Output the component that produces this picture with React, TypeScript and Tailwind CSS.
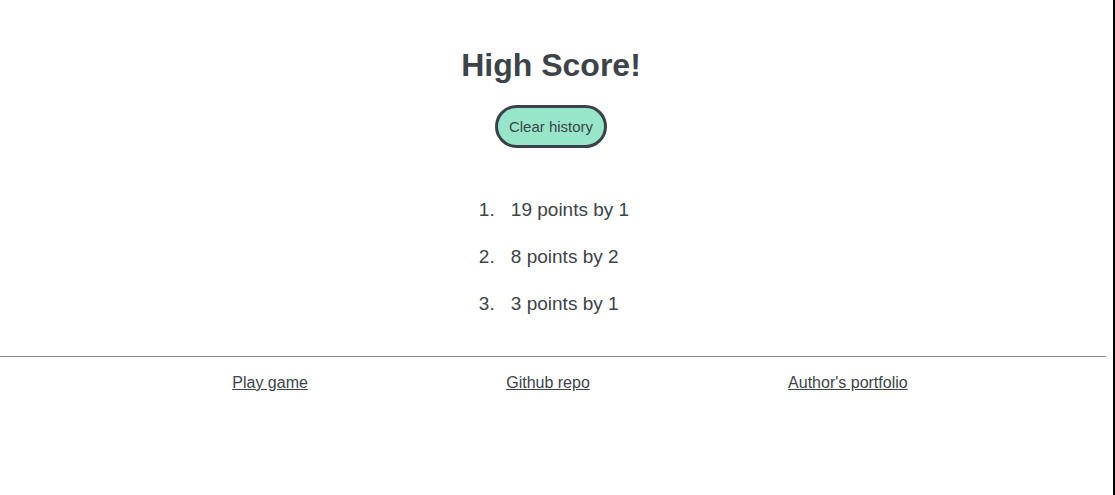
const scores = [
  { points: 19, by: 1 },
  { points: 8, by: 2 },
  { points: 3, by: 1 },
];

const links = ["Play game", "Github repo", "Author's portfolio"];

const App = () => {
  return (
    <div
      className="flex h-[495px] w-[1115px] bg-white text-[#3c4349]"
      style={{ fontFamily: '"Liberation Sans", Arial, sans-serif' }}
    >
      <div className="w-[1106px] shrink-0">
        <div className="flex flex-col items-center pr-[4px] pt-[46px]">
          <h1 className="text-[32px] font-bold leading-[38px]">High Score!</h1>
          <button className="mt-[21px] h-[43px] rounded-full border-[3px] border-[#3a4148] bg-[#98e6c9] px-[11px] text-[15px] leading-[17px]">
            Clear history
          </button>
          <ol className="ml-[6px] mt-[50px] flex flex-col gap-[24px] text-[19px] leading-[23px]">
            {scores.map((s, i) => (
              <li key={i} className="flex">
                <span className="w-[32px]">{i + 1}.</span>
                <span>
                  {s.points} points by {s.by}
                </span>
              </li>
            ))}
          </ol>
        </div>
        <hr className="mt-[41px] border-t border-[#8a8a8a]" />
        <div className="mt-[16px] flex justify-evenly pl-[34px] text-[16px] leading-[19px]">
          {links.map((l) => (
            <a key={l} href="#" className="underline">
              {l}
            </a>
          ))}
        </div>
      </div>
      <div className="w-[7px] shrink-0" />
      <div className="w-[2px] shrink-0 bg-black" />
    </div>
  );
};

export default App;
